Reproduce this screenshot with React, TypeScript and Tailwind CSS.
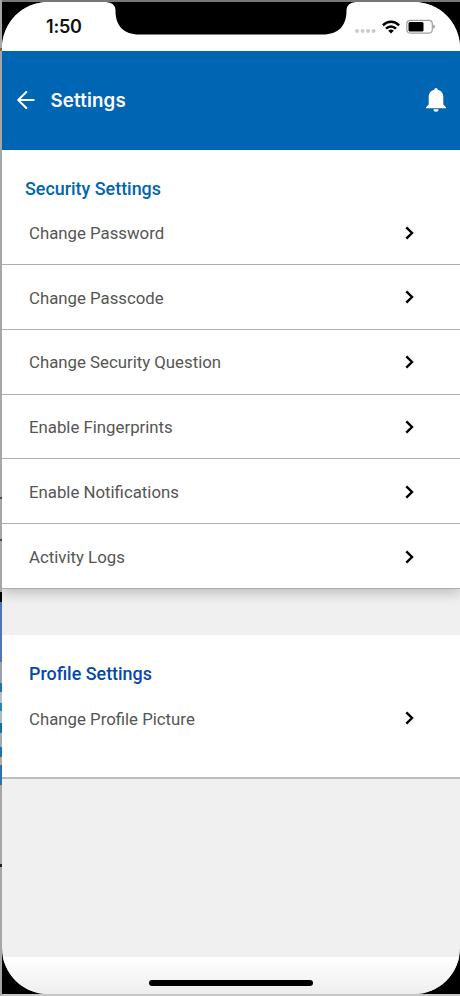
import React from "react";

interface RowProps {
  label: string;
  className?: string;
}

const securityItems: Array<string> = [
  "Change Password",
  "Change Passcode",
  "Change Security Question",
  "Enable Fingerprints",
  "Enable Notifications",
  "Activity Logs",
];

const SettingsRow = ({ label, className }: RowProps) => {
  return (
    <button className={`flex w-full items-center justify-between border-b border-[#adadad] pl-[27px] pr-[46px] text-left ${className}`}>
      <span className="pt-[1.5px] font-[Roboto,sans-serif] text-[16.8px] leading-5 text-[#555555]">{label}</span>
      <svg width="9" height="14" viewBox="0 0 9 14" fill="none" stroke="#000" strokeWidth="2.4" className="mt-px">
        <path d="M1.300 1.300 7 7 1.300 12.700" />
      </svg>
    </button>
  );
};

const StatusBar = () => {
  return (
    <div className="relative flex h-[49px] shrink-0 items-start bg-white">
      <svg className="absolute left-[104px] top-0" width="250" height="34" viewBox="0 0 250 34">
        <path d="M0 0H250Q241 .5 240.500 8V9C240.500 24 232 32.500 217 32.500H33C18 32.500 9.500 24 9.500 9V8Q9 .5 0 0Z" fill="#000" />
      </svg>
      <span className="ml-[44px] mt-[13px] font-[Inter,sans-serif] text-[18px] font-semibold leading-6 tracking-[-0.2px] text-[#111]">1:50</span>
      <div className="ml-auto mr-[24px] mt-[17px] flex items-center">
        <svg width="21" height="4" viewBox="0 0 21 4" fill="#c8c8c8" className="mt-[9px]">
          <rect x="0.300" y="0.200" width="3.500" height="3.600" rx="1" />
          <rect x="5.800" y="0.200" width="3.500" height="3.600" rx="1" />
          <rect x="11.300" y="0.200" width="3.500" height="3.600" rx="1" />
          <rect x="16.800" y="0.200" width="3.500" height="3.600" rx="1" />
        </svg>
        <svg width="18" height="14" viewBox="0 0 18 14" fill="none" stroke="#000" strokeWidth="2.5" className="ml-[6px]">
          <path d="M.9 5.300C5.500.6 12.500.6 17.100 5.300" />
          <path d="M4 8.600C6.900 5.700 11.100 5.700 14 8.600" />
          <path d="M9 13.500 6.200 10.700Q9 8.500 11.800 10.700Z" fill="#000" stroke="none" />
        </svg>
        <svg width="30" height="15" viewBox="0 0 30 15" className="ml-[6px]">
          <rect x=".8" y="1.300" width="25.500" height="12.800" rx="3.500" fill="none" stroke="#a0a0a0" strokeWidth="1.200" />
          <rect x="2.500" y="3" width="15" height="9.500" rx="1.500" fill="#000" />
          <path d="M27.300 5.200Q30.300 7.500 27.300 10Z" fill="#888" />
        </svg>
      </div>
    </div>
  );
};

const Header = () => {
  return (
    <header className="relative z-10 flex h-[99px] shrink-0 items-center bg-[#0065b3] pb-px pl-[15px] pr-[14px] text-white">
      <svg width="18" height="18" viewBox="0 0 18 18" fill="none" stroke="currentColor" strokeWidth="2" strokeLinecap="round" strokeLinejoin="round">
        <path d="M9.300 1 1.200 9l8.100 8M1.500 9H16.700" />
      </svg>
      <h1 className="ml-[15.5px] pt-[2px] font-[Inter,sans-serif] text-[18.7px] font-semibold leading-6 tracking-[0.15px]">Settings</h1>
      <svg width="20" height="24" viewBox="0 0 20 24" fill="currentColor" className="ml-auto">
        <path d="M8.300 1.800a1.700 1.700 0 0 1 3.400 0c3.700.8 5.600 3.700 5.600 7.200v7.500l2.700 2.700v1H0v-1l2.700-2.700V9c0-3.500 1.900-6.400 5.600-7.200Z" />
        <path d="M7.500 21.300h5a2.500 2.500 0 0 1-5 0Z" />
      </svg>
    </header>
  );
};

export default function App() {
  return (
    <div className="flex h-[996px] w-[460px] overflow-hidden bg-[#b8b8b8]">
      {/* sliver of the desktop behind the simulator */}
      <div className="flex w-[2px] shrink-0 flex-col bg-[#a6a6a6]">
        <div className="mt-[48px] h-[3px] bg-[#6e675c]" />
        <div className="mt-[446px] h-[2px] bg-[#4b4b4b]" />
        <div className="mt-[40px] h-[2px] bg-[#4b4b4b]" />
        <div className="mt-[51px] h-[10px] bg-black" />
        <div className="h-[60px] bg-[#4b76b8]" />
        <div className="h-[21px] bg-[#9c9fa9]" />
        <div className="h-[9px] bg-[#1a75a8]" />
        <div className="h-[11px] bg-[#b3c0cb]" />
        <div className="h-[8px] bg-[#2783ba]" />
        <div className="h-[12px] bg-[#a6bac6]" />
        <div className="h-[10px] bg-[#176fa5]" />
        <div className="h-[14px] bg-[#9cacb3]" />
        <div className="h-[10px] bg-[#1b73af]" />
        <div className="h-[8px] bg-[#b6a998]" />
        <div className="h-[20px] bg-[#2874a5]" />
        <div className="mt-[79px] h-[3px] bg-[#222]" />
      </div>
      <div className="flex grow flex-col border-b-2 border-t-2 border-b-[#c6c6c6] border-t-[#777] bg-black">
        <div className="flex grow flex-col overflow-hidden rounded-[46px] bg-[#f0f0f0]">
          <StatusBar />
          <Header />
          <section className="flex h-[439px] shrink-0 flex-col bg-white shadow-[0_4px_12px_rgba(0,0,0,0.22)]">
            <h2 className="ml-[23px] mt-[28.5px] font-[Roboto,sans-serif] text-[17.9px] font-medium leading-5 text-[#0065b0]">Security Settings</h2>
            <div className="mt-[1.7px]">
              {securityItems.map((label) => (
                <SettingsRow key={label} label={label} className="h-[64.8px]" />
              ))}
            </div>
          </section>
          <section className="mt-[46px] flex h-[144px] shrink-0 flex-col border-b-2 border-[#bdbdbd] bg-white">
            <h2 className="ml-[27px] mt-[29px] font-[Roboto,sans-serif] text-[17.9px] font-medium leading-5 text-[#0548ad]">Profile Settings</h2>
            <SettingsRow label="Change Profile Picture" className="mt-[2.4px] h-[64px] border-transparent" />
          </section>
          <footer className="mt-auto flex h-[37px] shrink-0 justify-center bg-gradient-to-b from-white to-[#eeeeee]">
            <div className="mt-[23px] h-[5.5px] w-[164px] rounded-full bg-black" />
          </footer>
        </div>
      </div>
    </div>
  );
}
